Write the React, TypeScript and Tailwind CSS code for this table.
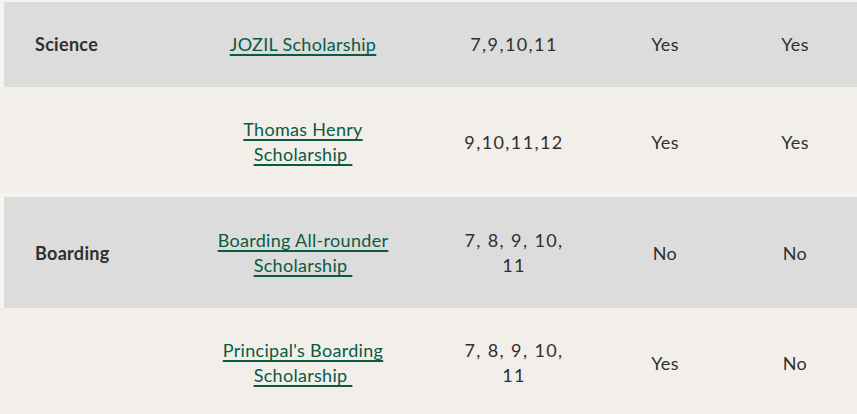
const rows = [
  { cat: 'Science', name: ['JOZIL Scholarship'], years: '7,9,10,11', a: 'Yes', b: 'Yes', gray: true },
  { cat: '', name: ['Thomas Henry', 'Scholarship\u00a0'], years: '9,10,11,12', a: 'Yes', b: 'Yes', gray: false },
  { cat: 'Boarding', name: ['Boarding All-rounder', 'Scholarship\u00a0'], years: '7, 8, 9, 10, 11', a: 'No', b: 'No', gray: true },
  { cat: '', name: ["Principal's Boarding", 'Scholarship\u00a0'], years: '7, 8, 9, 10, 11', a: 'Yes', b: 'No', gray: false },
];

export default function App() {
  return (
    <div className="w-[857px] h-[414px] overflow-hidden bg-[#f2efeb] text-[#2f2f2f] text-[18px] leading-[25px] tracking-[0.3px]" style={{ fontFamily: 'Lato, "Noto Sans", sans-serif' }}>
      {rows.map((r, i) => {
        const pad = i === 0 ? 'py-[30px]' : r.gray ? 'pt-[31px] pb-[30px]' : 'pt-[30px] pb-[26px]';
        return (
          <div
            key={i}
            className={
              r.gray
                ? `grid grid-cols-[171px_256px_166px_136px_124px] border-l-[4px] border-[#f6f5f0] bg-[#dcdcdc] ${i === 0 ? 'border-t-[2px]' : 'border-t-[4px]'}`
                : 'grid grid-cols-[171px_256px_166px_136px_124px] border-l-[4px] border-[#f2efeb] bg-[#f2efeb]'
            }
          >
            <div className={`flex items-center pl-[31px] font-bold ${pad}`}>{r.cat}</div>
            <div className={`flex items-center justify-center px-6 text-center ${pad}`}>
              <a href="#" className="text-[#0b5a42] underline underline-offset-[3px] decoration-[1.5px]">
                {r.name.map((n, j) => (
                  <span key={j} className="block">{n}</span>
                ))}
              </a>
            </div>
            <div className={`flex items-center justify-center px-[26px] text-center tracking-[1.4px] ${pad}`}>{r.years}</div>
            <div className={`flex items-center justify-center ${pad}`}>{r.a}</div>
            <div className={`flex items-center justify-center ${pad}`}>{r.b}</div>
          </div>
        );
      })}
    </div>
  );
}
